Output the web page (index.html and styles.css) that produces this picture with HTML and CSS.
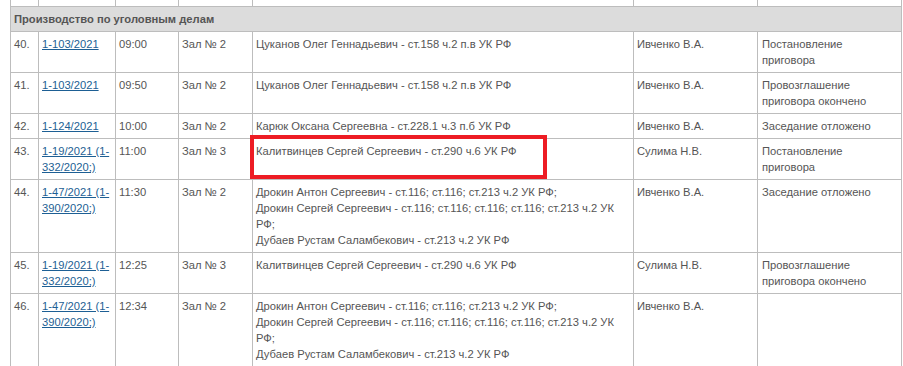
FILE: index.html
```html
<!DOCTYPE html>
<html lang="ru">
<head>
<meta charset="utf-8">
<link rel="stylesheet" href="styles.css">
</head>
<body>
<div class="page">
<table class="sched">
<colgroup>
<col class="c-num"><col class="c-case"><col class="c-time"><col class="c-hall"><col class="c-parties"><col class="c-judge"><col class="c-result">
</colgroup>
<tbody>
<tr class="prev"><td></td><td></td><td></td><td></td><td></td><td></td><td></td></tr>
<tr class="group"><td colspan="7">Производство по уголовным делам</td></tr>
<tr><td>40.</td><td><a href="#">1-103/2021</a></td><td>09:00</td><td>Зал № 2</td><td>Цуканов Олег Геннадьевич - ст.158 ч.2 п.в УК РФ</td><td>Ивченко В.А.</td><td class="result">Постановление приговора</td></tr>
<tr><td>41.</td><td><a href="#">1-103/2021</a></td><td>09:50</td><td>Зал № 2</td><td>Цуканов Олег Геннадьевич - ст.158 ч.2 п.в УК РФ</td><td>Ивченко В.А.</td><td class="result">Провозглашение приговора окончено</td></tr>
<tr><td>42.</td><td><a href="#">1-124/2021</a></td><td>10:00</td><td>Зал № 2</td><td>Карюк Оксана Сергеевна - ст.228.1 ч.3 п.б УК РФ</td><td>Ивченко В.А.</td><td class="result">Заседание отложено</td></tr>
<tr><td>43.</td><td><a href="#">1-19/2021 (1-332/2020;)</a></td><td>11:00</td><td>Зал № 3</td><td class="marked"><span class="mark"></span>Калитвинцев Сергей Сергеевич - ст.290 ч.6 УК РФ</td><td>Сулима Н.В.</td><td class="result">Постановление приговора</td></tr>
<tr><td>44.</td><td><a href="#">1-47/2021 (1-390/2020;)</a></td><td>11:30</td><td>Зал № 2</td><td>Дрокин Антон Сергеевич - ст.116; ст.116; ст.213 ч.2 УК РФ;<br>Дрокин Сергей Сергеевич - ст.116; ст.116; ст.116; ст.116; ст.213 ч.2 УК РФ;<br>Дубаев Рустам Саламбекович - ст.213 ч.2 УК РФ</td><td>Ивченко В.А.</td><td class="result">Заседание отложено</td></tr>
<tr><td>45.</td><td><a href="#">1-19/2021 (1-332/2020;)</a></td><td>12:25</td><td>Зал № 3</td><td>Калитвинцев Сергей Сергеевич - ст.290 ч.6 УК РФ</td><td>Сулима Н.В.</td><td class="result">Провозглашение приговора окончено</td></tr>
<tr><td>46.</td><td><a href="#">1-47/2021 (1-390/2020;)</a></td><td>12:34</td><td>Зал № 2</td><td>Дрокин Антон Сергеевич - ст.116; ст.116; ст.213 ч.2 УК РФ;<br>Дрокин Сергей Сергеевич - ст.116; ст.116; ст.116; ст.116; ст.213 ч.2 УК РФ;<br>Дубаев Рустам Саламбекович - ст.213 ч.2 УК РФ</td><td>Ивченко В.А.</td><td class="result"></td></tr>
</tbody>
</table>
</div>
</body>
</html>
```
FILE: styles.css
```css
html, body {
  margin: 0;
  padding: 0;
  background: #fff;
  overflow: hidden;
}
.page {
  padding-left: 10px;
  width: 891px;
}
.sched {
  margin-top: -15px;
  width: 891px;
  table-layout: fixed;
  border-collapse: collapse;
  font-family: "Liberation Sans", Arial, sans-serif;
  font-size: 11.2px;
  line-height: 16px;
  color: #555;
}
.c-num { width: 28px; }
.c-case { width: 77px; }
.c-time { width: 63px; }
.c-hall { width: 74px; }
.c-parties { width: 381px; }
.c-judge { width: 124px; }
.c-result { width: 144px; }
.sched td {
  border: 1px solid #bdbdbd;
  padding: 4px 3px;
  vertical-align: top;
}
.sched td.result {
  padding-left: 4px;
  padding-right: 7px;
}
.sched tr.prev td {
  height: 12px;
}
.sched tr.group td {
  background: #dcdcdc;
  font-weight: bold;
  color: #555;
}
.sched a {
  color: #1d5f94;
  text-decoration: underline;
}
.marked {
  position: relative;
}
.mark {
  position: absolute;
  left: -3px;
  top: -4px;
  width: 289px;
  height: 36px;
  border: 4px solid #ed1c24;
}
```
